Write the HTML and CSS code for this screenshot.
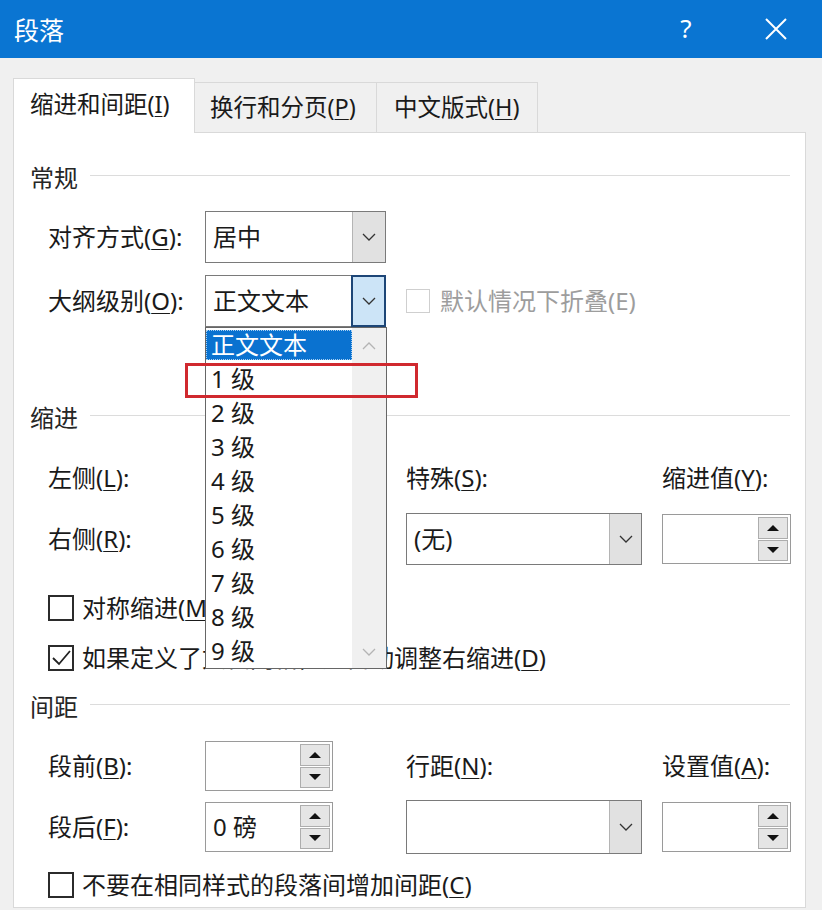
FILE: index.html
```html
<!DOCTYPE html>
<html lang="zh-CN">
<head>
<meta charset="utf-8">
<title>段落</title>
<link rel="stylesheet" href="styles.css">
</head>
<body>
<div class="dialog">
  <header class="titlebar">
    <span class="title">段落</span>
    <div class="title-btns">
      <span class="help">?</span>
      <span class="close-btn"><svg width="24" height="24" viewBox="0 0 24 24"><path d="M2 2L22 22M22 2L2 22" stroke="#fff" stroke-width="2" fill="none"/></svg></span>
    </div>
  </header>

  <main class="client">
    <nav class="tabs">
      <div class="tab tab1 active">缩进和间距(<u>I</u>)</div>
      <div class="tab tab2">换行和分页(<u>P</u>)</div>
      <div class="tab tab3">中文版式(<u>H</u>)</div>
    </nav>

    <section class="panel">
      <div class="group-head first"><span>常规</span><i class="rule"></i></div>
      <div class="grid general">
        <span class="lbl">对齐方式(<u>G</u>):</span>
        <div class="select c2">
          <span class="val">居中</span>
          <span class="btn"><svg width="14" height="8" viewBox="0 0 14 8"><path d="M1 1L7 7L13 1" stroke="#333" stroke-width="1.3" fill="none"/></svg></span>
        </div>

        <span class="lbl">大纲级别(<u>O</u>):</span>
        <div class="select c2 open">
          <span class="val">正文文本</span>
          <span class="btn"><svg width="14" height="8" viewBox="0 0 14 8"><path d="M1 1L7 7L13 1" stroke="#333" stroke-width="1.3" fill="none"/></svg></span>
          <div class="listbox">
            <ul class="items">
              <li class="item selected"><span>正文文本</span></li>
              <li class="item"><span>1 级</span></li>
              <li class="item"><span>2 级</span></li>
              <li class="item"><span>3 级</span></li>
              <li class="item"><span>4 级</span></li>
              <li class="item"><span>5 级</span></li>
              <li class="item"><span>6 级</span></li>
              <li class="item"><span>7 级</span></li>
              <li class="item"><span>8 级</span></li>
              <li class="item"><span>9 级</span></li>
            </ul>
            <div class="vscroll">
              <svg width="14" height="8" viewBox="0 0 14 8"><path d="M1 7L7 1L13 7" stroke="#b4b4b4" stroke-width="1.3" fill="none"/></svg>
              <svg width="14" height="8" viewBox="0 0 14 8"><path d="M1 1L7 7L13 1" stroke="#b4b4b4" stroke-width="1.3" fill="none"/></svg>
            </div>
            <div class="annot"></div>
          </div>
        </div>
        <div class="check disabled c4span">
          <span class="box small"></span>
          <span>默认情况下折叠(E)</span>
        </div>
      </div>

      <div class="group-head indent"><span>缩进</span><i class="rule"></i></div>
      <div class="grid rows2 indent-grid">
        <span class="lbl">左侧(<u>L</u>):</span>
        <div class="spinner c2">
          <span class="val"></span>
          <span class="spin"><span class="sb"><i class="up"></i></span><span class="sb"><i class="down"></i></span></span>
        </div>
        <span class="lbl c4">特殊(<u>S</u>):</span>
        <span class="lbl c6">缩进值(<u>Y</u>):</span>

        <span class="lbl">右侧(<u>R</u>):</span>
        <div class="spinner c2">
          <span class="val"></span>
          <span class="spin"><span class="sb"><i class="up"></i></span><span class="sb"><i class="down"></i></span></span>
        </div>
        <div class="select c4 wide">
          <span class="val">(无)</span>
          <span class="btn"><svg width="14" height="8" viewBox="0 0 14 8"><path d="M1 1L7 7L13 1" stroke="#333" stroke-width="1.3" fill="none"/></svg></span>
        </div>
        <div class="spinner c6 full">
          <span class="val"></span>
          <span class="spin"><span class="sb"><i class="up"></i></span><span class="sb"><i class="down"></i></span></span>
        </div>
      </div>

      <div class="check row-check mirror">
        <span class="box"></span>
        <span>对称缩进(<u>M</u>)</span>
      </div>
      <div class="check row-check grid-adjust">
        <span class="box checked"><svg width="22" height="22" viewBox="0 0 22 22"><path d="M3 11L9 17L20 4" stroke="#222" stroke-width="1.8" fill="none"/></svg></span>
        <span>如果定义了文档网格，则自动调整右缩进(<u>D</u>)</span>
      </div>

      <div class="group-head spacing"><span>间距</span><i class="rule"></i></div>
      <div class="grid rows2 spacing-grid">
        <span class="lbl">段前(<u>B</u>):</span>
        <div class="spinner c2">
          <span class="val"></span>
          <span class="spin"><span class="sb"><i class="up"></i></span><span class="sb"><i class="down"></i></span></span>
        </div>
        <span class="lbl c4">行距(<u>N</u>):</span>
        <span class="lbl c6">设置值(<u>A</u>):</span>

        <span class="lbl">段后(<u>F</u>):</span>
        <div class="spinner c2">
          <span class="val">0 磅</span>
          <span class="spin"><span class="sb"><i class="up"></i></span><span class="sb"><i class="down"></i></span></span>
        </div>
        <div class="select c4 wide tall">
          <span class="val"></span>
          <span class="btn"><svg width="14" height="8" viewBox="0 0 14 8"><path d="M1 1L7 7L13 1" stroke="#333" stroke-width="1.3" fill="none"/></svg></span>
        </div>
        <div class="spinner c6 full">
          <span class="val"></span>
          <span class="spin"><span class="sb"><i class="up"></i></span><span class="sb"><i class="down"></i></span></span>
        </div>
      </div>

      <div class="check row-check nospace">
        <span class="box"></span>
        <span>不要在相同样式的段落间增加间距(<u>C</u>)</span>
      </div>
    </section>
  </main>
</div>
</body>
</html>
```

FILE: styles.css
```css
* { box-sizing: border-box; }
html, body { margin: 0; padding: 0; }
body {
  width: 822px;
  height: 910px;
  overflow: hidden;
  background: #f0f0f0;
  font-family: "Noto Sans", "Noto Sans CJK SC", sans-serif;
  font-size: 24px;
  line-height: 1.2;
  color: #1a1a1a;
}
u { text-decoration-thickness: 1px; text-underline-offset: 3px; }

.dialog {
  width: 822px;
  height: 910px;
  display: flex;
  flex-direction: column;
}

/* title bar */
.titlebar {
  height: 58px;
  flex-shrink: 0;
  background: #0a75d2;
  color: #fff;
  display: flex;
  align-items: center;
  padding-left: 14px;
}
.title { flex: 1; font-size: 25px; padding-top: 2px; }
.title-btns { display: flex; align-items: center; padding-right: 1px; }
.help {
  width: 90px;
  text-align: center;
  font-size: 26px;
  font-family: "Noto Sans", sans-serif;
}
.close-btn {
  width: 90px;
  height: 58px;
  display: flex;
  align-items: center;
  justify-content: center;
}

/* client area */
.client {
  flex: 1;
  display: flex;
  flex-direction: column;
  padding: 20px 16px 2px 13px;
}

.tabs {
  display: flex;
  align-items: flex-end;
  height: 54px;
  position: relative;
  z-index: 2;
}
.tab {
  height: 50px;
  display: flex;
  align-items: center;
  background: #f0f0f0;
  border: 1px solid #d9d9d9;
  border-bottom: none;
  white-space: nowrap;
  color: #1a1a1a;
  font-size: 23.5px;
}
.tab1 { width: 182px; padding-left: 16px; }
.tab2 { width: 183px; margin-left: -1px; padding-left: 15px; }
.tab3 { width: 162px; margin-left: -1px; padding-left: 17px; }
.tab.active {
  height: 55px;
  margin-bottom: -1px;
  background: #fff;
  position: relative;
  z-index: 3;
  padding-bottom: 3px;
}

.panel {
  flex: 1;
  background: #fff;
  border: 1px solid #d9d9d9;
  padding-left: 16px;
  position: relative;
  z-index: 1;
}

.group-head {
  display: flex;
  align-items: center;
  height: 26px;
  color: #262626;
}
.group-head .rule {
  flex: 1;
  height: 1px;
  background: #dcdcdc;
  margin: 0 15px 6px 12px;
}
.group-head.first { margin-top: 32px; }
.group-head.indent { margin-top: 78px; }
.group-head.spacing { margin-top: 23px; }

.grid {
  display: grid;
  grid-template-columns: 157px 181px 20px 236px 20px 129px;
  margin-left: 18px;
}
.general {
  margin-top: 20px;
  grid-template-rows: 52px 52px;
  row-gap: 12px;
}
.indent-grid {
  margin-top: 21px;
  grid-template-rows: 52px 52px;
  row-gap: 9px;
}
.spacing-grid {
  margin-top: 21px;
  grid-template-rows: 50px 50px;
  row-gap: 11px;
}

.lbl {
  grid-column: 1;
  display: flex;
  align-items: center;
  white-space: nowrap;
}
.c2 { grid-column: 2; }
.c4 { grid-column: 4; }
.c6 { grid-column: 6; }
.c4span { grid-column: 4 / 7; }

/* combo boxes */
.select {
  display: flex;
  height: 52px;
  border: 1px solid #7a7a7a;
  background: #fff;
  position: relative;
}
.select .val {
  flex: 1;
  display: flex;
  align-items: center;
  padding-left: 7px;
}
.select .btn {
  width: 33px;
  background: #e1e1e1;
  border-left: 1px solid #b4b4b4;
  display: flex;
  align-items: center;
  justify-content: center;
}
.select.wide .btn { width: 32px; }
.select.tall { height: 54px; align-self: center; }
.select.open .btn {
  background: #cce4f7;
  border: 2px solid #1d4677;
  margin: -1px -1px -1px 0;
  width: 35px;
}

/* open list */
.listbox {
  position: absolute;
  left: -1px;
  top: 51px;
  width: 182px;
  height: 342px;
  border: 1px solid #666;
  background: #fff;
  display: flex;
  z-index: 20;
}
.items {
  list-style: none;
  margin: 0;
  padding: 0;
  width: 146px;
}
.item {
  height: 34px;
  display: flex;
  align-items: center;
}
.item span { padding-left: 5px; }
.item.selected span {
  width: 100%;
  height: 30px;
  display: flex;
  align-items: center;
  background: #0a72d0;
  color: #fff;
  outline: 1px dotted #a8d0f2;
  outline-offset: -1px;
}
.vscroll {
  flex: 1;
  background: #f0f0f0;
  display: flex;
  flex-direction: column;
  align-items: center;
  justify-content: space-between;
  padding: 14px 0 12px;
}
.annot {
  position: absolute;
  left: -21px;
  top: 35px;
  width: 233px;
  height: 35px;
  border: 3px solid #d0292f;
}

/* spinners */
.spinner {
  width: 128px;
  height: 50px;
  align-self: center;
  display: flex;
  border: 1px solid #9a9a9a;
  background: #fff;
}
.spinner.full { width: 129px; }
.spinner .val {
  flex: 1;
  display: flex;
  align-items: center;
  padding-left: 7px;
}
.spin {
  width: 32px;
  display: flex;
  flex-direction: column;
  gap: 1px;
  padding: 2px 2px 2px 0;
}
.sb {
  flex: 1;
  background: #e5e5e5;
  border: 1px solid #adadad;
  display: flex;
  align-items: center;
  justify-content: center;
}
.sb i {
  width: 0;
  height: 0;
  border-left: 6px solid transparent;
  border-right: 6px solid transparent;
}
.sb .up { border-bottom: 6px solid #111; }
.sb .down { border-top: 6px solid #111; }

/* checkboxes */
.check {
  display: flex;
  align-items: center;
  gap: 8px;
  height: 26px;
  white-space: nowrap;
}
.row-check { margin-left: 18px; }
.box {
  width: 26px;
  height: 26px;
  flex-shrink: 0;
  border: 2px solid #2b2b2b;
  background: #fff;
  display: flex;
  align-items: center;
  justify-content: center;
}
.box.small {
  width: 24px;
  height: 24px;
  border: 1px solid #cfcfcf;
}
.check.disabled { align-self: center; gap: 10px; color: #9d9d9d; }
.mirror { margin-top: 30px; }
.grid-adjust { margin-top: 24px; }
.nospace { margin-top: 20px; }
```
